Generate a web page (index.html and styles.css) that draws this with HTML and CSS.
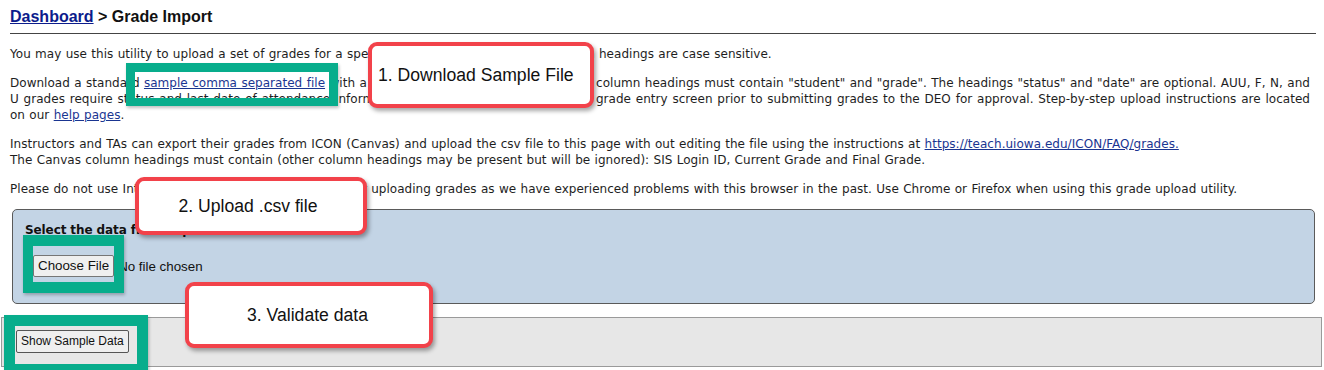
FILE: index.html
```html
<!DOCTYPE html>
<html lang="en">
<head>
<meta charset="utf-8">
<title>Grade Import</title>
<link rel="stylesheet" href="styles.css">
</head>
<body>
<div class="page">
  <h1 class="crumb"><a class="crumb-link" href="#">Dashboard</a> &gt; Grade Import</h1>

  <p class="intro first">You may use this utility to upload a set of grades for a specific course section. Note the column headings are case sensitive.</p>

  <p class="intro">Download a standard <a class="txt-link" href="#">sample comma separated file</a> with a .csv extension. In your data file, the column headings must contain "student" and "grade". The headings "status" and "date" are optional. AUU, F, N, and U grades require status and last date of attendance information. Check the validation page or grade entry screen prior to submitting grades to the DEO for approval. Step-by-step upload instructions are located on our <a class="txt-link" href="#">help pages</a>.</p>

  <p class="intro">Instructors and TAs can export their grades from ICON (Canvas) and upload the csv file to this page with out editing the file using the instructions at <a class="txt-link" href="#">https://teach.uiowa.edu/ICON/FAQ/grades.</a><br>The Canvas column headings must contain (other column headings may be present but will be ignored): SIS Login ID, Current Grade and Final Grade.</p>

  <p class="intro">Please do not use Internet Explorer and Microsoft Edge for uploading grades as we have experienced problems with this browser in the past. Use Chrome or Firefox when using this grade upload utility.</p>

  <div class="upload-panel">
    <div class="upload-title">Select the data file to upload</div>
    <div class="file-row">
      <span class="btn file-btn">Choose File</span>
      <span class="file-status">No file chosen</span>
    </div>
  </div>

  <div class="action-bar">
    <span class="btn sample-btn">Show Sample Data</span>
  </div>

  <div class="hl hl-1"></div>
  <div class="hl hl-2"></div>
  <div class="hl hl-3"></div>

  <div class="callout callout-1">1. Download Sample File</div>
  <div class="callout callout-2">2. Upload .csv file</div>
  <div class="callout callout-3">3. Validate data</div>
</div>
</body>
</html>
```

FILE: styles.css
```css
html, body {
  margin: 0;
  padding: 0;
  background: #ffffff;
}

.page {
  position: relative;
  width: 1324px;
  height: 370px;
  overflow: hidden;
  padding: 0 0 0 10px;
  box-sizing: border-box;
  font-family: "DejaVu Sans", Verdana, sans-serif;
  color: #1e1e1e;
}

.crumb {
  margin: 0;
  width: 1306px;
  padding: 8px 0 7px;
  line-height: 18px;
  font-family: "Liberation Sans", Arial, sans-serif;
  font-size: 16px;
  font-weight: bold;
  color: #111;
  border-bottom: 1px solid #444;
}

.crumb-link {
  color: #0c1c8c;
  text-decoration: underline;
}

.intro {
  width: 1300px;
  margin: 13px 0 0;
  font-size: 12px;
  line-height: 16px;
  word-spacing: 0.5px;
  letter-spacing: 0.03px;
  text-align: justify;
}

.intro.first {
  margin-top: 12px;
}

.txt-link {
  color: #1a3591;
  text-decoration: underline;
}

.upload-panel {
  margin: 12px 0 0 2px;
  width: 1303px;
  height: 95px;
  box-sizing: border-box;
  background: #c3d4e5;
  border: 1px solid #5a5a5a;
  border-radius: 5px;
  padding: 12px 12px 0;
}

.upload-title {
  font-weight: bold;
  font-size: 12px;
  line-height: 16px;
  letter-spacing: -0.1px;
  color: #111;
}

.file-row {
  display: flex;
  align-items: center;
  margin-top: 17px;
  margin-left: 8px;
  gap: 4px;
  font-family: "Liberation Sans", Arial, sans-serif;
  font-size: 13.33px;
  color: #111;
}

.btn {
  display: inline-block;
  box-sizing: border-box;
  background: #efefef;
  border: 1px solid #767676;
  border-radius: 2px;
  font-family: "Liberation Sans", Arial, sans-serif;
  color: #111;
}

.file-btn {
  height: 22px;
  line-height: 20px;
  padding: 0 4px;
  font-size: 13.33px;
}

.action-bar {
  margin: 13px 0 0 -9px;
  width: 1321px;
  height: 50px;
  box-sizing: border-box;
  background: #e7e7e7;
  border: 1px solid #9a9a9a;
  padding: 12px 0 0 14px;
}

.sample-btn {
  height: 23px;
  line-height: 21px;
  padding: 0 4px;
  font-size: 12px;
  border-color: #555;
}

.hl {
  position: absolute;
  box-sizing: border-box;
  border-style: solid;
  border-color: #08ad8c;
  box-shadow: 1px 2px 3px rgba(0, 0, 0, 0.25);
}

.hl-1 {
  left: 126px;
  top: 63px;
  width: 212px;
  height: 43px;
  border-width: 9px 9px 8px 9px;
}

.hl-2 {
  left: 23px;
  top: 235px;
  width: 101px;
  height: 58px;
  border-width: 11px 10px 11px 10px;
}

.hl-3 {
  left: 4px;
  top: 315px;
  width: 144px;
  height: 60px;
  border-width: 11px;
}

.callout {
  position: absolute;
  box-sizing: border-box;
  display: flex;
  align-items: center;
  justify-content: center;
  background: #ffffff;
  border: 4px solid #f2424a;
  border-radius: 9px;
  box-shadow: 2px 3px 4px rgba(0, 0, 0, 0.35);
  font-family: "Liberation Sans", Arial, sans-serif;
  font-size: 17.6px;
  color: #111;
}

.callout-1 {
  left: 368px;
  top: 42px;
  width: 226px;
  height: 66px;
  justify-content: flex-start;
  padding-left: 6px;
}

.callout-2 {
  left: 135px;
  top: 177px;
  width: 232px;
  height: 58px;
  padding-right: 6px;
}

.callout-3 {
  left: 185px;
  top: 282px;
  width: 248px;
  height: 66px;
  padding-right: 3px;
}
```
